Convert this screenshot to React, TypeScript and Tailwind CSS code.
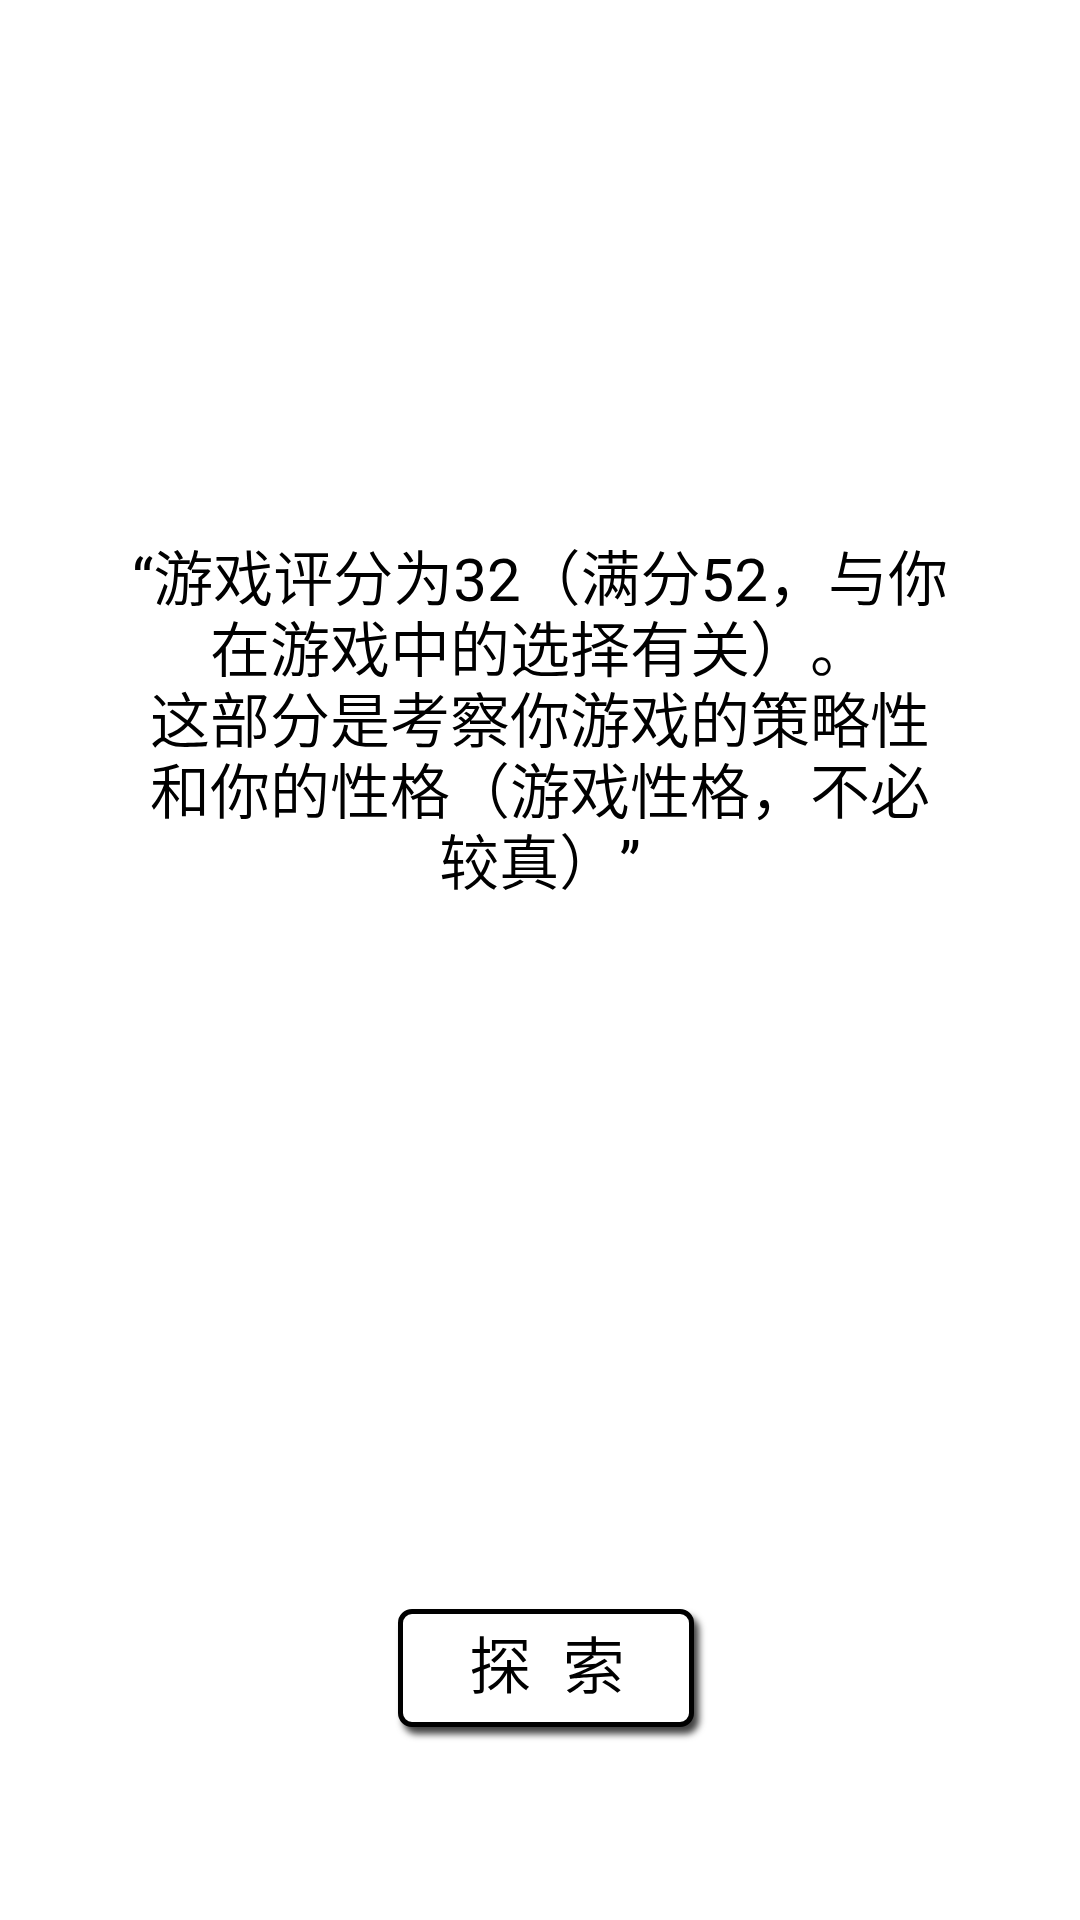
function App() {
  return (
    <main className="flex min-h-screen flex-col items-center bg-white font-['Roboto','Noto_Sans_CJK_SC',sans-serif] font-[350] text-black [text-spacing-trim:space-all]">
      <p
        lang="zh-CN"
        className="mt-[545px] px-32 text-center text-[60px] leading-[71px]"
      >
        <span className="font-normal">“</span>游戏评分为
        <span className="font-normal">32</span>（满分
        <span className="font-normal">52</span>，与你
        <br />
        在游戏中的选择有关）。
        <br />
        这部分是考察你游戏的策略性
        <br />
        和你的性格（游戏性格，不必
        <br />
        较真）<span className="font-normal">”</span>
      </p>
      <div className="mt-auto mb-[193px] pl-3">
        <button
          lang="zh-CN"
          className="rounded-[14px] border-[5px] border-black bg-white py-3 pr-16 pl-[66px] text-[62px] leading-[84px] shadow-[5px_7px_7px_rgba(0,0,0,0.75)]"
        >
          探&ensp;索
        </button>
      </div>
    </main>
  )
}

export default App
